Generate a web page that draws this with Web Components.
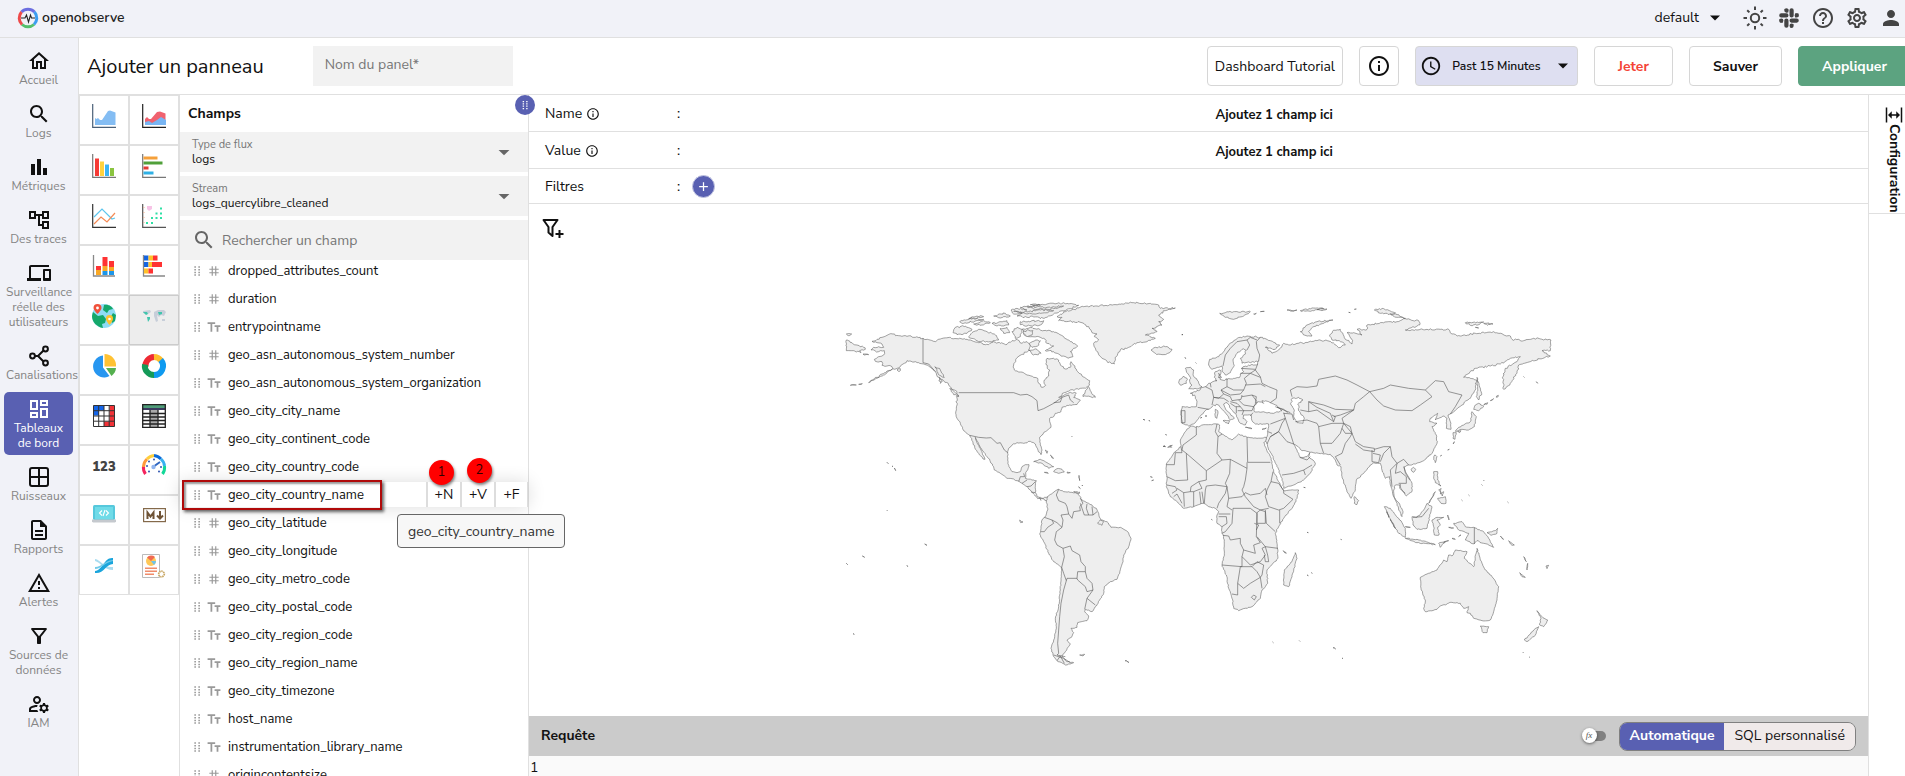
<!DOCTYPE html>
<html lang="fr">
<head>
<meta charset="utf-8">
<title>OpenObserve – Ajouter un panneau</title>
<style>
  html, body { margin: 0; height: 100%; overflow: hidden; }
  body { font: 14px/20px "Nunito Sans", "Open Sans", sans-serif; color: #111; background: #fff; --line: #e0e0e0; --side: #f1f2f8; --accent: #5960b2; }
</style>
</head>
<body>
<oo-app></oo-app>
<script>
const define = (name, html, setup) => {
  const t = document.createElement('template');
  t.innerHTML = html;
  customElements.define(name, class extends HTMLElement {
    connectedCallback() {
      if (this.shadowRoot) return;
      const root = this.attachShadow({ mode: 'open' });
      root.append(t.content.cloneNode(true));
      if (setup) setup(this, root);
    }
  });
};
const p = d => `<path d="${d}"/>`;

/* 24 x 24 glyphs drawn in the current colour */
const GLYPHS = {
  home: p('M12 5.69l5 4.5V18h-2v-6H9v6H7v-7.81l5-4.5M12 3L2 12h3v8h6v-6h2v6h6v-8h3L12 3z'),
  search: p('M15.5 14h-.79l-.28-.27C15.41 12.59 16 11.11 16 9.5 16 5.91 13.09 3 9.5 3S3 5.91 3 9.5 5.91 16 9.5 16c1.61 0 3.09-.59 4.23-1.57l.27.28v.79l5 4.99L20.49 19l-4.99-5zm-6 0C7.01 14 5 11.99 5 9.5S7.01 5 9.5 5 14 7.01 14 9.5 11.99 14 9.5 14z'),
  bars: p('M4 9h4v11H4zm12 4h4v7h-4zm-6-9h4v16h-4z'),
  tree: p('M22 11V3h-7v3H9V3H2v8h7V8h2v10h4v3h7v-8h-7v3h-2V8h2v3h7zM7 9H4V5h3v4zm10 6h3v4h-3v-4zm0-10h3v4h-3V5z'),
  devices: p('M4 6h18V4H4c-1.1 0-2 .9-2 2v11H0v3h14v-3H4V6zm19 2h-6c-.55 0-1 .45-1 1v10c0 .55.45 1 1 1h6c.55 0 1-.45 1-1V9c0-.55-.45-1-1-1zm-1 9h-4v-7h4v7z'),
  share: '<g fill="none" stroke="currentColor" stroke-width="2"><circle cx="18.5" cy="5" r="2.4"/><circle cx="5.5" cy="12" r="2.4"/><circle cx="18.5" cy="19" r="2.4"/><path d="M8 12h3l5.5-5.5M11 12l5.5 5.5"/></g>',
  dashboard: p('M19 5v2h-4V5h4M9 5v6H5V5h4m10 8v6h-4v-6h4M9 17v2H5v-2h4M21 3h-8v6h8V3zM11 3H3v10h8V3zm10 8h-8v10h8V11zm-10 4H3v6h8v-6z'),
  grid: '<path fill="none" stroke="currentColor" stroke-width="2" d="M5 3h14a2 2 0 0 1 2 2v14a2 2 0 0 1-2 2H5a2 2 0 0 1-2-2V5a2 2 0 0 1 2-2zM12 3v18M3 12h18"/>',
  doc: p('M8 16h8v2H8zm0-4h8v2H8zm6-10H6c-1.1 0-2 .9-2 2v16c0 1.1.89 2 1.99 2H18c1.1 0 2-.9 2-2V8l-6-6zm4 18H6V4h7v5h5v11z'),
  warn: p('M12 5.99L19.53 19H4.47L12 5.99M12 2L1 21h22L12 2zm1 14h-2v2h2v-2zm0-6h-2v4h2v-4z'),
  funnel: p('M7 6h10l-5.01 6.3L7 6zm-2.75-.39C6.27 8.2 10 13 10 13v6c0 .55.45 1 1 1h2c.55 0 1-.45 1-1v-6s3.72-4.8 5.74-7.39c.51-.66.04-1.61-.79-1.61H5.04c-.83 0-1.3.95-.79 1.61z'),
  funnelplus: '<path fill="none" stroke="currentColor" stroke-width="2" stroke-linejoin="round" d="M2.500 3h14L11.500 10v9L7.500 15.500V10zM18.500 13v8M14.500 17h8"/>',
  iam: p('M4 18v-.65c0-.34.16-.66.41-.81C6.1 15.53 8.03 15 10 15c.03 0 .05 0 .08.01.1-.7.3-1.37.59-1.98-.22-.02-.44-.03-.67-.03-2.42 0-4.68.67-6.61 1.82-.88.52-1.39 1.5-1.39 2.53V20h9.26c-.42-.6-.75-1.28-.97-2H4zM10 12c2.21 0 4-1.79 4-4s-1.79-4-4-4-4 1.79-4 4 1.79 4 4 4zm0-6c1.1 0 2 .9 2 2s-.9 2-2 2-2-.9-2-2 .9-2 2-2zM20.75 16c0-.22-.03-.42-.06-.63l1.14-1.01-1-1.73-1.45.49c-.32-.27-.68-.48-1.08-.63L18 11h-2l-.3 1.49c-.4.15-.76.36-1.08.63l-1.45-.49-1 1.73 1.14 1.01c-.03.21-.06.41-.06.63s.03.42.06.63l-1.14 1.01 1 1.73 1.45-.49c.32.27.68.48 1.08.63L16 21h2l.3-1.49c.4-.15.76-.36 1.08-.63l1.45.49 1-1.73-1.14-1.01c.03-.21.06-.41.06-.63zM17 18c-1.1 0-2-.9-2-2s.9-2 2-2 2 .9 2 2-.9 2-2 2z'),
  info: p('M11 7h2v2h-2zm0 4h2v6h-2zm1-9C6.48 2 2 6.48 2 12s4.480 10 10 10 10-4.480 10-10S17.520 2 12 2zm0 18c-4.410 0-8-3.590-8-8s3.590-8 8-8 8 3.590 8 8-3.590 8-8 8z'),
  help: p('M11 18h2v-2h-2v2zm1-16C6.48 2 2 6.48 2 12s4.480 10 10 10 10-4.480 10-10S17.520 2 12 2zm0 18c-4.410 0-8-3.590-8-8s3.590-8 8-8 8 3.590 8 8-3.590 8-8 8zm0-14c-2.210 0-4 1.790-4 4h2c0-1.100.9-2 2-2s2 .9 2 2c0 2-3 1.750-3 5h2c0-2.250 3-2.500 3-5 0-2.210-1.790-4-4-4z'),
  clock: p('M11.99 2C6.47 2 2 6.48 2 12s4.470 10 9.990 10C17.520 22 22 17.520 22 12S17.520 2 11.990 2zM12 20c-4.420 0-8-3.580-8-8s3.580-8 8-8 8 3.580 8 8-3.580 8-8 8zm.5-13H11v6l5.250 3.150.75-1.230-4.500-2.670z'),
  person: p('M12 12c2.210 0 4-1.790 4-4s-1.790-4-4-4-4 1.790-4 4 1.790 4 4 4zm0 2c-2.670 0-8 1.340-8 4v2h16v-2c0-2.660-5.330-4-8-4z'),
  gear: p('M19.43 12.98c.04-.32.07-.64.07-.98 0-.34-.03-.66-.07-.98l2.11-1.65c.19-.15.24-.42.12-.64l-2-3.46c-.09-.16-.26-.25-.44-.25-.06 0-.12.01-.17.03l-2.49 1c-.52-.4-1.08-.73-1.69-.98l-.38-2.65C14.46 2.18 14.25 2 14 2h-4c-.25 0-.46.18-.49.42l-.38 2.65c-.61.25-1.17.59-1.69.98l-2.49-1c-.06-.02-.12-.03-.18-.03-.17 0-.34.09-.43.25l-2 3.46c-.13.22-.07.49.12.64l2.11 1.65c-.04.32-.07.65-.07.98 0 .33.03.66.07.98l-2.11 1.65c-.19.15-.24.42-.12.64l2 3.46c.09.16.26.25.44.25.06 0 .12-.01.17-.03l2.49-1c.52.4 1.08.73 1.69.98l.38 2.65c.03.24.24.42.49.42h4c.25 0 .46-.18.49-.42l.38-2.65c.61-.25 1.17-.59 1.69-.98l2.49 1c.06.02.12.03.18.03.17 0 .34-.09.43-.25l2-3.46c.12-.22.07-.49-.12-.64l-2.11-1.65zm-1.98-1.71c.04.31.05.52.05.73 0 .21-.02.43-.05.73l-.14 1.13.89.7 1.08.84-.7 1.21-1.27-.51-1.04-.42-.9.68c-.43.32-.84.56-1.25.73l-1.06.43-.16 1.13-.2 1.35h-1.4l-.19-1.35-.16-1.13-1.06-.43c-.43-.18-.83-.41-1.23-.71l-.91-.7-1.06.43-1.27.51-.7-1.21 1.08-.84.89-.7-.14-1.13c-.03-.31-.05-.54-.05-.74s.02-.43.05-.73l.14-1.13-.89-.7-1.08-.84.7-1.21 1.27.51 1.04.42.9-.68c.43-.32.84-.56 1.25-.73l1.06-.43.16-1.13.2-1.35h1.39l.19 1.35.16 1.13 1.06.43c.43.18.83.41 1.23.71l.91.7 1.06-.43 1.27-.51.7 1.21-1.07.85-.89.7.14 1.13zM12 8c-2.21 0-4 1.790-4 4s1.790 4 4 4 4-1.790 4-4-1.790-4-4-4zm0 6c-1.100 0-2-.9-2-2s.9-2 2-2 2 .9 2 2-.9 2-2 2z'),
  sun: '<g fill="none" stroke="currentColor" stroke-width="2"><circle cx="12" cy="12" r="4.200"/><path d="M12 0.500v3.500M12 20v3.500M0.500 12H4M20 12h3.500M4.200 4.200l2.200 2.200M17.600 17.600l2.200 2.200M4.200 19.800l2.200-2.200M17.600 6.400l2.200-2.200"/></g>',
  slack: '<g stroke="currentColor" stroke-width="4.200" stroke-linecap="round"><path d="M9.400 4.300v.1M9.400 9.400H4.300M14.600 4.300v5.100M19.700 9.400v.1M14.600 14.600h5.100M14.600 19.700v.1M9.400 14.600v5.100M4.300 14.600v.1"/></g><path d="M7.300 3h4v3.500H9zM18 7.500h3.500v3L18 11.500zM13 18h3.500l-1 3.500h-2.500zM2.500 13H6v3.500H3z"/>',
  caret: p('M7 9.500l5 5 5-5z'),
  select: p('M5.500 9.500L12 16l6.500-6.500z'),
  hash: p('M20 10V8h-4V4h-2v4h-4V4H8v4H4v2h4v4H4v2h4v4h2v-4h4v4h2v-4h4v-2h-4v-4h4zm-6 4h-4v-4h4v4z'),
  text: p('M1 4v3h5v13h3V7h5V4zm22 5h-10v3h3.500v8h3v-8H23z'),
  dots: p('M8 5h2.400v2.200H8zM14 5h2.400v2.200H14zM8 9h2.400v2.200H8zM14 9h2.400v2.200H14zM8 13h2.400v2.200H8zM14 13h2.400v2.200H14zM8 17h2.400v2.200H8zM14 17h2.400v2.200H14z'),
  plus: p('M19 13h-6v6h-2v-6H5v-2h6V5h2v6h6v2z'),
  width: '<path d="M1 2h2v20H1zM21 2h2v20h-2zM4 12l5-5v4h6V7l5 5-5 5v-4H9v4z"/>'
};

/* 24 x 24 coloured pictures of the panel types */
const axes = c => `<path d="M.7 0v23.300H24" fill="none" stroke="${c}" stroke-width="1.200"/>`;
const TYPES = [
  ['Aire', axes('#4a6078') + '<path fill="#84bdf3" d="M3 14l1.500 1L6 14l2 2h2l6-9 2-.5 5.500 2V21H3z"/>'],
  ['Aire empilée', axes('#222') + '<path fill="#f0626f" d="M3 15l2-2 2 2h2l6-7 3-.5 5.500 2V21H3z"/><path fill="#78b5f3" d="M3 18l4-1 3 2 5-3 4-3 5 3v5H3z"/>'],
  ['Barres', axes('#777') + '<path fill="#f63a35" d="M3 4.500h4V22H3z"/><path fill="#ffd23f" d="M8 7.500h4V22H8z"/><path fill="#3bb5f5" d="M13 10.500h4V22h-4z"/><path fill="#8ac43f" d="M18 14h4v8h-4z"/>'],
  ['Barres horizontales', axes('#777') + '<path fill="#f5a03a" d="M1.500 2.500h14v3h-14z"/><path fill="#50a03a" d="M1.500 7.500h19v3h-19z"/><path fill="#e33a35" d="M1.500 12.500h5v3h-5z"/><path fill="#2fb0e5" d="M1.500 17.500h10v3h-10z"/>'],
  ['Lignes', axes('#333') + '<path fill="none" stroke="#5cc6ee" stroke-width="1.200" d="M2 13l8-8 10 10 3-1"/><path fill="none" stroke="#f58a55" stroke-width="1.200" d="M2 20l7-7 6 5 8-9"/>'],
  ['Nuage de points', axes('#555') + '<path fill="#f7c3e6" d="M5 2h5v3l-3 2-2-2z"/><path fill="#2fe0a5" d="M18 3.500h2v2h-2zM18 8.500h2v2h-2zM13.500 8.500h2v2h-2zM9 13h2v2H9zM13.500 13h2v2h-2zM18 13h2v2h-2zM4 18h2v2H4zM9 18h2v2H9z"/><path stroke="#f5b090" stroke-dasharray="1 4" d="M2 3v18"/>'],
  ['Barres empilées', '<path d="M1.500 1v21H23" fill="none" stroke="#888" stroke-width="1.300"/><path fill="#f33" d="M4 12h5v4H4zM10.500 3h5v9h-5zM17 7h5v6h-5z"/><path fill="#f9a825" d="M4 16h5v5H4zM10.500 12h5v5h-5zM17 13h5v4h-5z"/><path fill="#1d96e8" d="M10.500 17h5v4h-5zM17 17h5v4h-5z"/>'],
  ['Barres horizontales empilées', '<path d="M1.500 1v21H23" fill="none" stroke="#888" stroke-width="1.300"/><path fill="#1565e0" d="M2 1.500h4.500v5H2zM2 8h4.500v5H2z"/><path fill="#ffc02a" d="M6.500 1.500H11v5H6.500zM6.500 8H10v5H6.500zM2 14.500h4.500v5H2z"/><path fill="#f33" d="M11 1.500h4.500v5H11zM10 8h10v5H10zM6.500 14.500H11v5H6.500z"/>'],
  ['Carte géographique', '<circle cx="12" cy="12" r="12" fill="#8fdcf5"/><path fill="#15a86b" d="M1 8l5 4 5-1 3 4-1 4-3 1 1 4C5 23 0 18 0 12zM12 1c5-1 8 2 9 4l-4 1-2 3-4-3zM21 9l3 2-1 6-3 2-2-5z"/><path fill="#f0503a" d="M5.500 0a4 4 0 0 1 4 4c0 2-4 6-4 6s-4-4-4-6a4 4 0 0 1 4-4z"/><circle cx="5.500" cy="4" r="1.400" fill="#fff"/><path fill="#ffc22e" d="M17.500 11a3.700 3.700 0 0 1 3.500 4c0 2-3.500 6-3.500 6S14 17 14 15a3.700 3.700 0 0 1 3.500-4z"/><circle cx="17.500" cy="15" r="1.300" fill="#fff"/>'],
  ['Cartes', '<g fill="#c7ced9"><path d="M1 7l7-1 1 2-3 2-5-1zM12 8l4-2 6 0 2 2-2 4-3-1-2 2-2-2 1 6-2 1-2-6zM20 15l3 0 0 2-3 0z"/></g><path fill="#41c5ad" d="M1 8l4 0 1 2-2 1zM5 13l3 0 0 2-2 3zM16 8l4 0 0 2-3 1z"/>'],
  ['Secteurs', '<path fill="#2796f0" d="M11 2.500v11l6.500 8.500A11 11 0 1 1 11 1.500z"/><path fill="#ffc233" d="M12.500 0A11.500 11.500 0 0 1 24 12.500H12.500z"/><path fill="#55b04f" d="M14 14h10c0 3-2 6-4.500 8z"/>'],
  ['Anneau', '<g fill="none" stroke-width="6"><path stroke="#ee2a33" d="M3.500 13A9 9 0 0 1 12 3"/><path stroke="#ffbd2c" d="M12 3a9 9 0 0 1 7 3.500"/><path stroke="#0f9af0" d="M18.700 6A9 9 0 0 1 12 21"/><path stroke="#159a58" d="M12 21a9 9 0 0 1-9-10.500"/></g>'],
  ['Carte thermique', '<path fill="#fff" d="M1.500 1.500h21v21h-21z"/><path fill="#1465e8" d="M1.500 1.500H12v5H7v5H1.500z"/><path fill="#f23237" d="M17.500 1.500h5v21H12v-5h5.500z"/><path fill="none" stroke="#333" d="M1.500 1.500h21v21h-21zM6.700 1.500v21M12 1.500v21M17.200 1.500v21M1.500 6.700h21M1.500 12h21M1.500 17.200h21"/>'],
  ['Tableau', '<path fill="#fff" d="M.7.7h22.600v22.600H.7z"/><path fill="#4f9c79" d="M.7.7h22.600V4H.7z"/><path fill="#3a3a5e" d="M.7 4h22.600v2H.7z"/><path fill="#aaa" d="M8 6h8v17H8z"/><path fill="none" stroke="#222" stroke-width="1.300" d="M.7.7h22.600v22.600H.7zM.7 9.500h22.600M.7 13h22.600M.7 16.500h22.600M.7 20h22.600M8 6v17M16 6v17"/>'],
  ['Métrique', '<text x="12" y="17" text-anchor="middle" font-family="Nunito Sans, Open Sans, sans-serif" font-weight="900" font-size="13" fill="#444">123</text>'],
  ['Jauge', '<g fill="none" stroke-width="3"><path stroke="#f5245e" d="M3.500 20A11 11 0 0 1 1.500 12"/><path stroke="#ff9a3c" d="M1.500 13A11 11 0 0 1 5 5"/><path stroke="#ffcf3c" d="M5 5a11 11 0 0 1 7-3.500"/><path stroke="#0d6bd8" d="M12 1.500A11 11 0 0 1 19 5"/><path stroke="#38b0f0" d="M19 5a11 11 0 0 1 3.500 7"/><path stroke="#12d898" d="M22.500 12a11 11 0 0 1-2 8"/></g><path stroke="#2f66c0" stroke-width="2" d="M11 13l7-5"/><circle cx="11.500" cy="13" r="2.200" fill="#8fb4ee"/><g fill="#2f55b0"><circle cx="5" cy="12" r="1"/><circle cx="7" cy="7.500" r="1"/><circle cx="12" cy="5.500" r="1"/><circle cx="19" cy="13" r="1"/><circle cx="7" cy="17.500" r="1"/><circle cx="17" cy="17.500" r="1"/></g>'],
  ['HTML', '<rect x="1" y="1" width="22" height="15" rx="1.500" fill="#56c8dc"/><rect x="3" y="3" width="18" height="12" fill="#6fdbe8"/><path fill="#c5c9ce" d="M0 15.500h24v2l-1 1H1l-1-1z"/><path fill="none" stroke="#fff" stroke-width="1.100" d="M10 6.500L7.500 9l2.500 2.500M14 6.500L16.500 9 14 11.500M13 6l-2 6"/>'],
  ['Markdown', '<rect x="1.600" y="4.600" width="21.800" height="13" fill="#fff" stroke="#84694a" stroke-width="1.200"/><path fill="none" stroke="#6f5335" stroke-width="2" d="M5.500 15V8.500l3 4 3-4V15M18 7v6M15 11.500l3 3 3-3"/>'],
  ['Sankey', '<path fill="#a9dcf0" d="M3 5c6 1 9 9 18 8v3c-9 0-13-8-18-9z"/><path fill="#1aa5dc" d="M3 17C11 16 12 3 21 4v6c-7 0-9 10-18 9z"/><path fill="#74cbe9" d="M3 13c7 0 9-6 18-7v1C13 8 9 15 3 15z"/>'],
  ['Personnalisé', '<path fill="#fff" stroke="#bbb" d="M.5.500h17v23H.5z"/><circle cx="9" cy="7" r="5" fill="#ffc857"/><path fill="#f06a50" d="M9 7L5 3.500A5.500 5.500 0 0 1 13 3z"/><path fill="#6ec3ea" d="M9 7h5a5 5 0 0 1-2 4z"/><path stroke="#f08c6a" stroke-width="1.500" d="M3 14.200h12M3 17.200h12M3 20.200h9"/><circle cx="19.500" cy="20" r="2.800" fill="#fff" stroke="#c9a866" stroke-width="1.700" stroke-dasharray="1.500 .6"/>']
];

define('oo-icon', '<style>:host{display:inline-flex;flex:none;width:var(--size,24px);height:var(--size,24px)}svg{width:100%;height:100%;fill:currentColor;overflow:visible}</style><svg viewBox="0 0 24 24" aria-hidden="true"></svg>',
  (el, r) => r.querySelector('svg').innerHTML = GLYPHS[el.getAttribute('name')]);

define('oo-header', `<style>
  :host{display:flex;align-items:center;flex:none;box-sizing:border-box;height:38px;padding:0 2px 2px 17px;background:var(--side);border-bottom:1px solid var(--line)}
  a{display:flex;align-items:center;gap:3px;color:#222;text-decoration:none;font:600 14px/20px Nunito,"Nunito Sans","Open Sans",sans-serif}
  .org{margin-left:auto;display:flex;align-items:center;gap:4px;border:0;background:none;padding:0;font:inherit;color:inherit}
  nav{display:flex;gap:10px;margin-left:16px;color:#444}
  nav button{border:0;background:none;padding:0;display:flex;color:inherit}
</style>
<a href="#"><svg width="22" height="22" viewBox="0 0 22 22"><g fill="none" stroke-width="3"><path stroke="#6c6ee0" d="M4.500 5A9 9 0 0 1 17.500 5"/><path stroke="#3b9df0" d="M17.500 5a9 9 0 0 1-.5 12.500"/><path stroke="#55c06c" d="M17 17.500a9 9 0 0 1-12 0"/><path stroke="#ee4a4a" d="M5 17.500A9 9 0 0 1 4.500 5"/></g><path fill="none" stroke="#222" stroke-width="1.100" d="M4 11h4l1.500-3 2 7 2-7 1 3H18"/></svg>openobserve</a>
<button class="org">default<oo-icon name="caret"></oo-icon></button>
<nav><button aria-label="Thème"><oo-icon name="sun"></oo-icon></button><button aria-label="Slack"><oo-icon name="slack"></oo-icon></button><button aria-label="Aide"><oo-icon name="help"></oo-icon></button><button aria-label="Réglages"><oo-icon name="gear"></oo-icon></button><button aria-label="Profil"><oo-icon name="person"></oo-icon></button></nav>`);

define('oo-nav-item', `<style>
  :host{display:block;margin:0 4px 5px}
  a{display:flex;flex-direction:column;align-items:center;padding:5px 2px 4px;border-radius:5px;color:#858585;text-decoration:none;font-size:12px;line-height:15px;text-align:center}
  oo-icon{color:#111}
  span{width:100%}
  :host([active]) a{background:var(--accent);color:#fff}
  :host([active]) oo-icon{color:#fff}
</style><a href="#"><oo-icon></oo-icon><span><slot></slot></span></a>`,
  (el, r) => {
    const i = document.createElement('oo-icon');
    i.setAttribute('name', el.getAttribute('icon'));
    r.querySelector('oo-icon').replaceWith(i);
  });

define('oo-sidebar', `<style>:host{display:block;flex:none;width:79px;padding-top:6px;box-sizing:border-box;background:var(--side);border-right:1px solid var(--line)}nav{padding-right:1px}</style>
<nav><oo-nav-item icon="home">Accueil</oo-nav-item><oo-nav-item icon="search">Logs</oo-nav-item><oo-nav-item icon="bars">Métriques</oo-nav-item><oo-nav-item icon="tree">Des traces</oo-nav-item><oo-nav-item icon="devices">Surveillance réelle des utilisateurs</oo-nav-item><oo-nav-item icon="share">Canalisations</oo-nav-item><oo-nav-item icon="dashboard" active>Tableaux de bord</oo-nav-item><oo-nav-item icon="grid">Ruisseaux</oo-nav-item><oo-nav-item icon="doc">Rapports</oo-nav-item><oo-nav-item icon="warn">Alertes</oo-nav-item><oo-nav-item icon="funnel">Sources de données</oo-nav-item><oo-nav-item icon="iam">IAM</oo-nav-item></nav>`);

define('oo-toolbar', `<style>
  :host{display:flex;align-items:center;flex:none;height:56px;padding:0 8px;border-bottom:1px solid var(--line)}
  h1{margin:0 49px 0 0;padding-top:2px;font-size:20px;line-height:32px;font-weight:400;white-space:nowrap}
  input{box-sizing:border-box;width:200px;height:40px;border:0;background:#f2f2f2;padding:0 12px 4px;font:inherit;color:#111}
  input::placeholder{color:#777;opacity:1}
  div{display:flex;gap:16px;margin-left:auto}
  button{box-sizing:border-box;height:40px;border:1px solid #d6d6d6;border-radius:4px;background:#fff;font:inherit;color:#111;padding:2px 7px 0;display:flex;align-items:center;justify-content:center;white-space:nowrap}
  .b{font-weight:700}
  .time{background:#dedff1;width:163px;font-size:12px;font-weight:600;justify-content:space-between;padding:0 2px 0 4px}
  .time oo-icon:first-child{--size:22px}
  .info{width:40px;padding-top:0}
  .throw{color:#f44336;width:79px}
  .save{width:93px}
  .apply{width:113px;background:#5ca380;border-color:#5ca380;color:#fff}
</style>
<h1>Ajouter un panneau</h1><input placeholder="Nom du panel*" aria-label="Nom du panel">
<div><button>Dashboard Tutorial</button><button class="info" aria-label="Informations"><oo-icon name="info"></oo-icon></button><button class="time"><oo-icon name="clock"></oo-icon>Past 15 Minutes<oo-icon name="caret"></oo-icon></button><button class="b throw">Jeter</button><button class="b save">Sauver</button><button class="b apply">Appliquer</button></div>`);

define('oo-types', `<style>
  :host{display:block;flex:none;width:101px;box-sizing:border-box;border-right:1px solid var(--line)}
  div{display:grid;grid-template-columns:48px 48px;grid-auto-rows:48px;gap:2px;padding:1px;background:var(--line)}
  button{border:0;padding:8px 12px 16px;background:#fff;display:block}
  button.on{background:#ededed;outline:1px solid #ccc}
  svg{display:block;width:24px;height:24px;overflow:visible}
</style><div></div>`,
  (el, r) => r.querySelector('div').innerHTML = TYPES.map(([n, s], i) => `<button aria-label="${n}"${i === 9 ? ' class="on"' : ''}><svg viewBox="0 0 24 24" fill="#000">${s}</svg></button>`).join(''));

define('oo-select', `<style>
  :host{display:block;position:relative;background:#f2f2f2;margin-bottom:4px;height:40px}
  label{display:block;padding:6px 12px 0;font-size:11px;line-height:13px;color:#777}
  select{appearance:none;display:block;width:100%;border:0;background:none;padding:0 12px;font:inherit;font-size:12px;line-height:16px;height:16px;color:#111}
  oo-icon{position:absolute;right:14px;top:10px;color:#666;--size:20px}
</style><label for="s"></label><select id="s"><option></option></select><oo-icon name="select"></oo-icon>`,
  (el, r) => {
    r.querySelector('label').textContent = el.getAttribute('label');
    r.querySelector('option').textContent = el.getAttribute('value');
  });

define('oo-field', `<style>
  :host{display:flex;align-items:center;height:28px;padding-left:9px;font-size:13px;position:relative}
  .drag{--size:16px;color:#999}
  .kind{--size:14px;color:#999;margin:0 7px 0 2px}
  .hover{display:none}
  :host([hovered]){z-index:2}
  :host([hovered])::before{content:"";position:absolute;z-index:-1;left:0;right:0;top:1px;bottom:2px;background:#fff;box-shadow:0 0 18px rgba(0,0,0,.14)}
  :host([hovered]) .hover{display:flex;align-self:stretch;margin:1px 0 2px auto;font-size:14px}
  .hover button{box-sizing:border-box;width:34px;border:0;border-left:2px solid #ddd;background:#fff;padding:0;font:inherit;color:#111}
  .hover button:last-child{border-right:1px solid #ddd}
  .mark{display:none;position:absolute;box-sizing:border-box;left:2px;top:-1px;width:200px;height:30px;border:2px solid #b00a0a;box-shadow:2px 2px 3px rgba(0,0,0,.6),inset 2px 2px 2px rgba(0,0,0,.4)}
  :host([hovered]) .mark{display:block}
  ::slotted(oo-badge){position:absolute}
</style><oo-icon class="drag" name="dots"></oo-icon><oo-icon class="kind"></oo-icon><span class="name"></span><span class="mark"></span><span class="hover"><button>+N</button><button>+V</button><button>+F</button></span><slot></slot>`,
  (el, r) => {
    const k = document.createElement('oo-icon');
    k.className = 'kind';
    k.setAttribute('name', el.getAttribute('kind'));
    r.querySelector('.kind').replaceWith(k);
    r.querySelector('.name').textContent = el.getAttribute('name');
  });

define('oo-badge', `<style>:host{display:block;width:25px;height:25px;border-radius:50%;background:#f00;text-align:center;font-size:13px;line-height:25px;color:#300;box-shadow:1px 2px 3px rgba(0,0,0,.5)}</style><slot></slot>`);
define('oo-tooltip', `<style>:host{display:block;position:absolute;z-index:3;left:217px;top:33px;box-sizing:border-box;height:34px;padding:7px 10px 5px;border:1px solid #666;border-radius:4px;background:#f7f7f7;font-size:14px;line-height:20px;color:#333;white-space:nowrap}</style><slot></slot>`);

const FIELDS = ['#dropped_attributes_count', '#duration', 'entrypointname', '#geo_asn_autonomous_system_number', 'geo_asn_autonomous_system_organization', 'geo_city_city_name', 'geo_city_continent_code', 'geo_city_country_code', 'geo_city_country_name', '#geo_city_latitude', '#geo_city_longitude', '#geo_city_metro_code', 'geo_city_postal_code', 'geo_city_region_code', 'geo_city_region_name', 'geo_city_timezone', 'host_name', 'instrumentation_library_name', '#origincontentsize'];
define('oo-fields', `<style>
  :host{display:block;flex:none;width:349px;box-sizing:border-box;border-right:1px solid var(--line);position:relative;z-index:1}
  h2{margin:0;padding:9px 8px 8px;font-size:14px;line-height:20px}
  .search{display:flex;align-items:center;gap:6px;height:40px;padding-left:12px;background:#f2f2f2;color:#666}
  .search input{flex:1;border:0;background:none;font:inherit;padding:1px 0 0;outline:0}
  .search input::placeholder{color:#777;opacity:1}
  .list{margin-top:-3px}
  .knob{position:absolute;top:0;right:-7px;width:20px;height:20px;border:0;border-radius:50%;padding:0;background:var(--accent);color:#fff;display:flex;align-items:center;justify-content:center;--size:14px}
</style><h2>Champs</h2><oo-select label="Type de flux" value="logs"></oo-select><oo-select label="Stream" value="logs_quercylibre_cleaned"></oo-select>
<div class="search"><oo-icon name="search"></oo-icon><input placeholder="Rechercher un champ" aria-label="Rechercher un champ"></div><div class="list"></div><button class="knob" aria-label="Redimensionner"><oo-icon name="dots"></oo-icon></button>`,
  (el, r) => r.querySelector('.list').innerHTML = FIELDS.map((f, i) => `<oo-field kind="${f[0] === '#' ? 'hash' : 'text'}" name="${f.replace('#', '')}"${i === 8 ? ' hovered' : ''}>${i === 8 ? '<oo-badge style="left:249px;top:-21px">1</oo-badge><oo-badge style="left:287px;top:-23px">2</oo-badge><oo-tooltip>geo_city_country_name</oo-tooltip>' : ''}</oo-field>`).join(''));

define('oo-axis', `<style>
  :host{display:flex;align-items:center;box-sizing:border-box;height:37px;padding:1px 0 0 16px;border-bottom:1px solid var(--line)}
  .l{display:flex;align-items:center;gap:4px;width:132px}
  .l oo-icon{--size:14px}
  .drop{flex:1;text-align:center;font-size:13px;font-weight:700;padding-top:3px}
  :host([filter]){height:35px}
  button{display:flex;align-items:center;justify-content:center;width:23px;height:23px;margin-left:12px;padding:0;border:1px solid #c3c6e2;border-radius:50%;background:var(--accent);color:#fff;--size:15px}
</style><span class="l"><slot></slot></span><span>:</span>`,
  (el, r) => r.host.hasAttribute('filter')
    ? r.append(Object.assign(document.createElement('button'), { innerHTML: '<oo-icon name="plus"></oo-icon>', ariaLabel: 'Ajouter un filtre' }))
    : (r.append(Object.assign(document.createElement('span'), { className: 'drop', textContent: 'Ajoutez 1 champ ici' })), r.querySelector('.l').insertAdjacentHTML('beforeend', '<oo-icon name="info"></oo-icon>')));

/* Outlines of the world map: coastlines, then borders */
const WEST = {
  land: [
    '95,154 110,148 125,142 140,136 158,132 175,137 200,139 225,142 248,145 265,149 280,154 300,147 330,142 350,146 375,148 395,152 415,158 445,164 460,155 480,160 500,163 515,152 530,148 545,160 560,155 570,165 565,182 545,193 530,203 520,225 522,240 540,246 560,255 580,262 592,265 595,280 605,292 614,288 612,270 625,258 628,240 618,225 620,205 640,205 655,210 663,228 675,237 690,232 692,215 700,225 712,245 725,258 748,272 748,285 735,295 715,298 690,300 672,308 655,322 670,316 690,307 708,310 700,322 720,330 712,340 695,346 680,346 665,352 662,365 645,370 640,380 628,385 630,400 632,412 615,425 598,442 600,460 605,480 602,494 594,485 585,462 570,454 550,460 530,458 515,465 505,475 502,490 502,510 506,530 515,545 530,548 540,545 545,530 555,524 566,524 562,540 556,548 555,565 575,570 588,572 585,590 585,608 592,620 605,625 618,622 626,620 622,634 605,626 592,626 580,612 570,600 560,590 545,580 530,572 515,566 500,565 480,550 462,540 456,522 440,500 425,480 412,455 405,442 412,462 422,480 434,508 428,507 415,490 403,472 398,455 388,436 370,422 360,400 350,385 346,370 350,345 348,320 355,318 350,305 335,298 325,285 310,272 295,262 285,245 270,232 250,222 235,218 215,215 200,212 188,222 170,235 150,242 130,255 110,265 85,278 110,262 135,248 155,238 155,230 140,228 125,226 125,215 105,214 102,208 115,200 130,195 132,182 115,185 92,180 100,172 130,172 125,162 110,158',
    '650,80 675,65 700,58 730,50 770,48 820,44 880,38 930,40 955,45 960,55 1005,54 975,62 955,75 970,88 955,95 965,105 935,115 950,125 915,135 945,145 920,155 890,158 865,172 840,180 828,200 822,222 800,215 785,205 770,185 760,160 775,150 762,140 770,132 755,128 745,110 725,98 700,95 655,92 665,82',
    '512,60 530,55 560,60 540,52 600,46 570,44 620,42 680,40 715,46 690,56 640,72 620,82 600,86 575,78 560,82 530,78 545,70 520,72', '540,95 610,92 600,105 560,108 540,104', '385,140 395,128 415,118 440,125 465,135 475,150 450,155 410,152', '345,112 375,108 395,118 380,130 350,134 338,128',
    '358,95 390,85 430,88 370,100', '400,102 430,92 450,98 425,105', '385,86 410,78 430,80 410,84', '455,100 500,92 505,105 470,108', '460,78 495,70 510,78 480,84', '480,115 500,112 508,128 490,130', '515,125 530,112 545,118 540,140 525,145',
    '545,118 575,112 600,120 640,125 670,140 690,155 712,168 700,175 690,185 698,200 680,203 655,192 640,185 615,182 640,168 620,160 610,145 595,140 575,140 555,138', '565,180 590,178 602,190 580,195', '548,128 560,120 578,122 575,135 560,140', '567,160 585,150 600,152 592,168 575,172',
    '520,64 560,66 600,60 640,62 600,70 560,72', '560,50 620,52 670,48 640,56 590,58', '728,320 735,302 745,290 752,305 765,322 750,320', '328,296 345,308 355,320 340,314', '284,230 300,240 312,262 298,256', '296,262 306,272 300,280', '580,515 600,508 620,518 640,530 625,535 605,520', '640,545 650,536 665,538 672,546 655,550', '612,547 620,547 624,550', '680,546 690,548 682,550', '615,480 622,484 620,490', '630,495 640,505 635,504',
    '618,632 622,620 640,606 655,598 670,605 705,608 715,615 725,630 745,640 768,655 775,670 782,690 800,695 812,712 840,712 862,725 872,745 865,770 850,795 846,820 838,850 830,868 810,875 792,890 790,910 778,930 768,948 755,965 735,958 733,965 745,978 740,992 712,998 710,1012 692,1015 700,1028 695,1040 680,1050 690,1062 675,1085 665,1098 680,1115 700,1118 675,1125 650,1112 638,1095 632,1075 640,1050 648,1010 645,985 655,950 660,900 663,860 664,832 640,815 625,790 610,755 598,732 602,715 605,690 615,680 622,660',
    '932,180 945,172 975,170 995,178 988,188 965,194 945,190', '718,1095 733,1093 728,1098', '18,150 35,158 50,165 70,172 75,178 58,182 62,188 40,182 18,182', '18,132 34,132 25,137', '68,192 85,194', '170,240 180,236 176,245', '30,286 48,285', '55,283 66,281', '140,517 144,521', '155,528 158,530', '162,534 166,542', '538,690 548,696 541,698', '854,1112 866,1117', '926,390 928,394', '908,388 914,390', '716,556 718,572', '715,590 720,596', '725,585 727,588', '700,605 718,606 716,612', '772,700 780,690 790,695 785,706', '968,470 974,468', '982,472 990,468 994,472', '930,560 936,562', '934,572 940,570', '66,798 73,802', '18,820 22,824', '38,1031 42,1033', '976,432 978,436', '1024,134 1028,134', '1066,218 1068,220', '1034,202 1036,206', '694,438 695,440', '140,661 142,663', '253,762 260,766', '200,826 202,830'
  ],
  borders: '248,145 248,218 265,222 285,245|355,308 520,308 540,315 560,313 575,320 590,332 593,362 610,356 640,340 665,322 685,315 690,330 700,338|640,338 660,336 665,322|388,436 415,442 438,444 452,443 470,460 480,458 492,480 502,488|535,575 540,560 553,560 550,550|545,580 560,570|560,590 572,588 585,575|572,606 585,608|598,622 602,632|655,598 648,615 655,632 675,640 680,650 685,672|612,682 635,690 640,700 622,712 612,725 602,725|635,690 650,698 665,712 668,690 662,675 685,672 695,685 700,665 720,662 718,650 728,640 720,625|720,640 725,655 732,675 745,675 738,655 740,642|745,675 758,675 755,650|758,675 770,665|665,712 648,725 643,750 650,765 668,775 672,800 664,832|668,775 690,768 695,782 718,795 722,815 735,830 735,845 712,845 710,865 680,865 678,872 670,850 664,832|735,845 740,865 755,880 758,900 740,905 735,890 712,870 710,865|758,900 740,925 765,945|740,925 733,958|678,872 670,900 662,940 658,980 655,1020 652,1060 655,1090 650,1095 675,1100|640,1095 670,1105 690,1118|650,1112 660,1098 672,1120'
};
const EAST = {
  land: [
    '290,138 270,142 250,152 235,165 220,185 205,200 178,208 175,225 185,238 205,232 215,228 216,245 225,255 240,248 250,230 248,210 260,190 275,178 288,180 280,195 270,205 275,220 300,218 325,212 322,222 295,225 275,235 280,245 270,252 268,262 250,265 232,268 215,270 205,262 212,248 208,240 195,245 192,262 200,272 188,275 175,280 165,290 150,295 145,302 120,310 135,320 140,335 138,350 120,352 95,350 92,370 95,400 115,408 135,398 150,378 165,362 180,355 190,345 205,345 215,358 228,372 240,390 252,385 240,372 226,358 220,342 230,338 240,355 255,370 262,385 270,400 285,405 290,395 278,385 280,375 302,375 305,392 315,402 340,402 355,402 353,420 350,440 345,452 352,470 365,495 380,530 395,565 400,595 430,585 460,570 480,550 495,520 488,510 475,500 478,488 470,500 450,502 440,480 430,462 440,468 455,482 475,485 505,490 540,493 555,510 560,525 572,530 575,560 590,605 602,625 615,600 618,570 640,550 660,525 670,518 690,520 695,540 705,565 718,560 722,590 728,615 740,640 745,660 755,680 758,665 748,642 732,622 730,600 735,585 748,585 755,600 768,618 785,605 785,580 765,550 762,530 775,525 795,522 820,512 845,490 860,460 858,435 845,410 860,400 838,395 840,385 862,370 855,390 878,378 890,385 888,415 902,418 900,395 893,375 910,365 935,345 960,325 975,300 978,270 960,265 940,262 975,235 1020,228 1050,222 1080,205 1110,200 1100,215 1065,235 1058,260 1060,298 1080,280 1100,250 1105,225 1140,215 1200,198 1175,182 1200,182 1202,150 1150,145 1120,152 1085,148 1080,138 1030,125 975,130 930,138 905,132 895,118 830,118 800,120 765,120 808,105 805,92 760,86 740,95 690,98 650,105 650,118 620,118 635,135 610,128 590,128 605,148 605,162 585,148 570,118 550,120 538,135 545,150 570,155 585,165 565,173 555,165 530,152 500,152 470,158 440,160 420,165 400,160 395,170 385,180 365,190 345,172 375,178 388,165 360,152 330,142',
    '120,408 135,412 165,404 200,402 208,405 205,425 215,432 245,450 265,432 290,442 320,445 348,442 345,455 340,458 355,490 365,515 370,545 385,575 400,602 445,600 440,625 425,655 400,685 385,710 375,730 380,760 383,805 350,840 352,880 335,900 330,925 305,950 265,962 250,955 245,925 235,895 228,855 215,825 222,790 222,750 215,730 215,710 200,700 200,675 205,665 195,655 175,650 160,640 130,650 100,655 80,635 60,620 48,590 50,570 47,545 48,522 70,490 92,470 90,450 105,425',
    '105,235 120,232 130,240 128,255 140,270 148,285 155,290 140,297 115,296 125,285 118,275 120,262 112,250', '88,268 100,258 110,265 108,280 92,286 85,278', '450,125 470,105 500,95 548,90 520,100 490,110 475,125 485,138 460,135', '208,70 250,65 300,65 280,78 250,88 225,82', '410,60 440,60 430,64', '450,62 490,54 520,56 480,64', '500,58 530,57 515,62', '672,60 700,56 735,68 720,72 690,70', '720,72 745,74 765,85 740,82', '945,98 1000,96 985,104 960,106', '1000,100 1028,102 1012,106', '975,112 985,114', '310,72 318,70', '330,65 342,64', '595,67 600,68', '612,58 618,57',
    '975,345 985,340 1000,350 985,362 970,358', '965,365 978,380 972,410 955,420 935,418 915,424 925,412 940,405 960,395', '908,428 918,428 914,448 908,445', '922,424 932,422 928,428', '980,262 990,300 994,310 985,330 978,320 982,290', '1000,346 1012,338', '1020,332 1030,326', '1038,322 1044,316', '853,495 860,500 855,518 850,508', '782,538 790,532 796,538 790,547', '850,545 862,545 862,570 872,588 855,578 850,565', '862,625 885,620 887,640 872,640', '865,600 872,595 870,612 880,605 876,618', '835,640 855,605', '785,680 800,682 820,660 830,640 845,650 838,680 830,715 800,718 788,705', '702,650 720,655 745,685 765,715 765,742 745,730 725,700', '765,745 800,748 840,760 855,764 800,758', '865,760 885,755 870,772', '845,690 860,682 880,682 860,690 870,705 862,712 866,735 852,735 850,710', '910,700 935,695 945,710 970,712 1000,725 1015,745 1030,772 1000,760 980,752 970,762 945,750 955,730 925,720', '1010,728 1035,722 1042,715 1040,730 1022,736', '1050,738 1060,748', '1075,752 1092,765 1085,766', '892,675 896,690', '895,712 910,714', '880,757 895,752', '905,745 915,748', '925,740 932,735', '612,620 625,632 618,645 612,640', '435,788 440,805 425,860 415,890 400,885 402,840 425,815', '810,862 830,852 860,840 880,810 890,815 895,795 905,798 915,780 950,785 942,805 970,830 980,775 990,810 1005,840 1025,860 1045,890 1040,930 1030,965 1020,990 995,992 970,985 960,970 950,968 955,950 940,955 930,940 905,937 870,948 860,958 825,965 820,955 825,930 812,895', '990,1008 1015,1010 1010,1028 998,1028', '1160,962 1175,980 1192,990 1180,1010 1168,1005 1172,985', '1165,1010 1155,1035 1130,1055 1122,1050 1150,1020', '1108,848 1125,862 1115,860', '1120,800 1128,815', '1132,820 1130,840', '1187,828 1195,826 1190,836', '195,358 202,362 200,385 195,382', '218,392 238,392 234,402', '285,412 305,416', '335,418 348,414', '150,384 155,382', '164,378 170,378', '398,782 408,790', '470,855 474,857', '483,848 486,850', '460,592 465,593', '548,1073 556,1077', '575,1104 578,1106', '367,1056 369,1058', '710,665 716,682', '720,688 735,715', '765,710 780,712', '994,584 996,586', '1000,571 1002,573', '934,630 936,632', '955,615 957,617', '470,727 474,728', '571,748 574,749', '870,498 874,496', '892,480 897,478', '908,462 912,455', '1120,260 1122,262', '1158,275 1162,280', '183,688 186,690', '205,250 214,262 206,264', '96,133 98,135', '447,1052 449,1054', '1118,1087 1120,1089', '1137,1101 1139,1103', '1072,636 1074,638', '40,468 46,470', '58,468 66,466'
  ],
  borders: '320,150 300,142 290,150 260,155 240,175 225,195 218,228|290,150 298,165 290,180|330,142 318,155 320,175 328,195 325,212|322,222 315,240 330,260 335,280 355,290 380,300 378,325 360,338|425,320 420,300 440,290 470,292 500,288 505,268 555,258 590,270 620,285 658,305 640,320 615,340 610,360 555,358 520,345 475,335 475,365 450,360|658,305 700,295 720,285 775,295 825,300 845,320 810,345 785,362 735,360 700,348 680,330 658,305|825,300 855,272 880,275 895,305 935,315 915,350 900,372|610,360 575,385 580,400 605,430 600,440|550,380 570,375 610,360|550,395 555,380 545,375|435,395 470,390 500,400 505,410 545,400 580,400 570,430 545,460 510,460 505,410|475,335 500,352 540,370 550,395|475,365 500,360 550,395|510,460 520,490|600,440 585,460 575,490 555,500 570,525|580,400 600,410 605,430 585,430 575,415|605,430 615,455 640,470 672,475 672,485 640,480 615,462|672,478 700,470 720,470|665,480 665,515 685,518 690,495 668,490|720,470 700,490 690,515|720,470 725,500 740,520 720,540 725,590|740,520 735,550 750,545 768,560 768,580 745,580|740,520 760,508 775,525|750,582 748,595 765,610|760,530 765,545 780,570|400,368 405,385 360,402|405,385 395,400 385,425 360,440|405,385 420,430 430,462|350,462 360,440 385,425 410,455 430,462|353,425 365,430|395,555 430,550 460,540 465,555|448,502 470,510 480,500|485,525 460,540|375,350 420,368|400,370 425,372 430,390|380,352 400,358 412,368|142,352 175,358|104,362 104,398 93,398 93,362 104,362|165,290 185,300 190,322 185,345|180,280 182,292|230,265 230,290 212,300 220,312 205,325 190,322|230,290 250,300 280,300 288,280 282,265|285,285 330,282 345,290|282,265 300,250 330,262|212,300 240,315 270,312 280,300|220,312 240,320 245,332 272,328 275,315|190,322 220,325 235,335|275,320 305,315 320,335 310,350 280,345 265,330|305,315 318,320 315,340|240,335 260,340 270,350 255,350 240,340|270,350 280,362 305,362 310,350|262,362 280,362 275,375|258,350 258,370|272,235 315,238|270,250 300,250 315,240|300,378 308,368|138,410 138,435 98,465 95,480|48,524 72,524 75,488 95,488 92,470|95,480 108,490 112,570 75,572 50,560|108,490 168,542 168,570 145,575 122,590 120,605 100,608|168,542 215,510|215,510 200,490 203,440 195,425 200,402|215,510 240,508 290,535 290,517|203,440 215,432|240,508 238,550 225,580 230,590|165,600 168,588 195,585 230,590 225,610 205,640 200,655|165,600 162,640|145,575 155,595 130,605 120,605|290,442 292,517 360,517|290,535 285,570 280,590 275,600 285,620|230,590 235,625 275,620 285,608 300,615 330,610 345,595 350,615|368,545 362,575 350,600 345,620 355,650 385,660 400,655 428,628 400,610 400,602|362,575 385,580 400,602|285,620 310,650 330,660 355,655|388,660 388,700|345,660 348,700 375,725|320,668 330,660 345,665 345,700 320,700 320,668|248,655 300,655 320,670 318,740 330,758 310,765 315,790 280,780 270,760 270,745 240,750 235,738 218,736|248,655 245,700 225,725 215,730|235,625 230,650 245,660|205,672 240,672|205,680 228,680 230,700 215,710|320,740 345,770 383,775|280,780 275,800 275,830 215,825|275,800 300,825 330,815 345,795 335,775 345,770 352,795 355,815 345,815 342,795|270,830 262,880 280,895 300,880 330,862 320,845 305,830 270,830|305,830 320,815 340,825 335,855 330,862 335,895|262,880 262,915 245,912|303,922 310,915 318,920 312,930 303,922|130,605 130,650|148,605 152,642|155,605 160,640|100,608 102,650|80,595 100,608|50,585 75,590 80,600 65,610|70,620 80,612 95,640|312,700 325,705 318,720|972,712 972,762|788,682 815,680 835,655'
};
const SEAS = ['312,365 310,350 325,335 340,340 335,332 355,335 378,345 395,362 370,370 335,366', '425,325 445,322 458,330 442,342 448,365 462,385 458,400 440,398 430,380 432,362 422,345'];

/* Coastlines get a small repeatable raggedness between their points */
const coast = s => {
  const pts = s.split(' ').map(q => q.split(',').map(Number));
  let seed = pts[0][0] * 7 + pts[0][1];
  const rnd = () => (seed = (seed * 9301 + 49297) % 233280) / 233280 - .5;
  const out = [];
  pts.forEach((a, i) => {
    const b = pts[(i + 1) % pts.length], len = Math.hypot(b[0] - a[0], b[1] - a[1]), n = Math.max(1, Math.round(len / 5));
    const north = a[1] < 350 ? 5 : 3;
    for (let k = 0; k < n; k++) {
      const j = k ? north : 0;
      out.push((a[0] + (b[0] - a[0]) * k / n + rnd() * j).toFixed(1) + ' ' + (a[1] + (b[1] - a[1]) * k / n + rnd() * j).toFixed(1));
    }
  });
  return 'M' + out.join('L') + 'Z';
};
const half = (m, dx, seas = []) => `<g transform="translate(${dx} 0)">${m.land.map(s => `<path d="${coast(s)}"/>`).join('')}${seas.map(s => `<path class="sea" d="${coast(s)}"/>`).join('')}${m.borders.split('|').map(s => `<polyline points="${s}"/>`).join('')}</g>`;

define('oo-world-map', `<style>
  :host{display:flex;justify-content:center}
  svg{width:720px;max-width:100%;display:block}
  path{fill:#eee;stroke:#555;stroke-width:1.600;stroke-linejoin:round}
  .sea{fill:#fff}
  polyline{fill:none;stroke:#555;stroke-width:1.800;stroke-linejoin:round}
</style><svg viewBox="-4 0 2160 1170" role="img" aria-label="Carte du monde"></svg>`,
  (el, r) => r.querySelector('svg').innerHTML = half(WEST, 0) + half(EAST, 930, SEAS));

define('oo-query', `<style>
  :host{display:block;flex:none}
  .bar{display:flex;align-items:center;height:40px;padding:0 12px;background:#cbcbcb}
  h2{margin:0;font-size:14px;line-height:20px}
  .sw{position:relative;margin-left:auto;margin-right:13px;width:24px;height:16px}
  .sw input{appearance:none;position:absolute;margin:0;left:8px;top:3px;width:16px;height:10px;border-radius:5px;background:#808080}
  .sw span{position:absolute;left:0;top:0;width:15px;height:15px;border-radius:50%;background:#fff;box-shadow:0 1px 3px rgba(0,0,0,.5);font:italic 9px/14px "Liberation Serif",serif;text-align:center;color:#555}
  .seg{display:flex;border:1px solid #808080;border-radius:8px;overflow:hidden}
  .seg button{border:0;height:27px;padding:0 10px;font:inherit;background:#f0eaea;color:#111}
  .seg .on{background:var(--accent);color:#fff;font-weight:700}
  .code{display:flex;box-sizing:border-box;height:20px;padding:3px 1px 0;background:#fafafa}
  .code textarea{flex:1;border:0;background:none;resize:none;font:inherit;padding:0 8px;height:17px;box-sizing:border-box;outline:0;overflow:hidden}
  .code span{line-height:18px}
</style><div class="bar"><h2>Requête</h2><label class="sw" aria-label="Fonction"><input type="checkbox"><span>fx</span></label><div class="seg"><button class="on">Automatique</button><button>SQL personnalisé</button></div></div><div class="code"><span>1</span><textarea aria-label="Requête SQL"></textarea></div>`);

define('oo-config', `<style>
  :host{display:block;flex:none;width:50px;border-left:1px solid var(--line)}
  button{display:flex;flex-direction:column;align-items:center;box-sizing:border-box;width:100%;padding:11px 0 0;border:0;border-bottom:1px solid var(--line);background:none;font:inherit;font-weight:700;color:#111;--size:18px}
  span{writing-mode:vertical-rl;line-height:18px}
</style><button><oo-icon name="width"></oo-icon><span>Configuration</span></button>`);

define('oo-app', `<style>
  :host{display:flex;flex-direction:column;height:100vh;overflow:hidden}
  .body{display:flex;flex:1;min-height:0}
  main{flex:1;min-width:0;display:flex;flex-direction:column;margin-right:-14px}
  .work{display:flex;flex:1;min-height:0}
  .panel{flex:1;min-width:0;display:flex;flex-direction:column}
  .chart{flex:1;min-height:0}
  .chart button{display:flex;border:0;background:none;padding:13px 0 0 12px;color:#111}
  .top{display:flex;align-items:flex-start;height:86px}
</style>
<oo-header></oo-header>
<div class="body"><oo-sidebar></oo-sidebar><main><oo-toolbar></oo-toolbar><div class="work"><oo-types></oo-types><oo-fields></oo-fields>
<div class="panel"><oo-axis>Name</oo-axis><oo-axis>Value</oo-axis><oo-axis filter>Filtres</oo-axis><div class="chart"><div class="top"><button aria-label="Ajouter un filtre de carte"><oo-icon name="funnelplus"></oo-icon></button></div><oo-world-map></oo-world-map></div><oo-query></oo-query></div>
<oo-config></oo-config></div></main></div>`);
</script>
</body>
</html>
